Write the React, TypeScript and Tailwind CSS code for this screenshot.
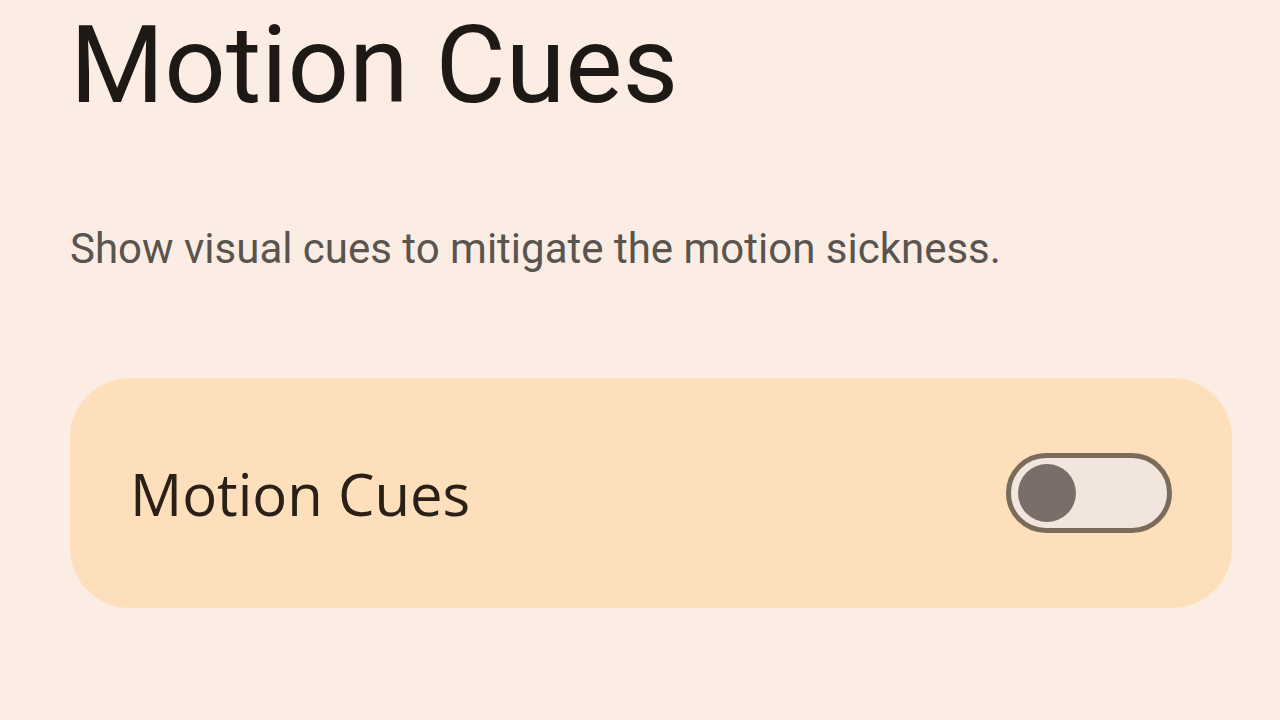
export default function App() {
  return (
    <div className="w-[1280px] h-[720px] overflow-hidden bg-[#fbede3] font-['Open_Sans',sans-serif]">
      <div className="pl-[70px] pr-[48px] pt-[11px]">
        <h1 className="font-['Roboto',sans-serif] text-[108px] leading-none text-[#1e1914]">Motion Cues</h1>
        <p className="mt-[109px] font-['Roboto',sans-serif] text-[42px] leading-none text-[#5a544f]">
          Show visual cues to mitigate the motion sickness.
        </p>
        <div className="mt-[108px] h-[230px] rounded-[60px] bg-[#fde0bb] flex items-center justify-between pl-[60px] pr-[60px]">
          <span className="text-[58px] text-[#2a2018]">Motion Cues</span>
          <button className="w-[166px] h-[80px] rounded-full border-[5px] border-[#7b6b5a] bg-[#f2e5dd] flex items-center px-[7px]">
            <span className="w-[58px] h-[58px] rounded-full bg-[#7a6f68]" />
          </button>
        </div>
      </div>
    </div>
  )
}
